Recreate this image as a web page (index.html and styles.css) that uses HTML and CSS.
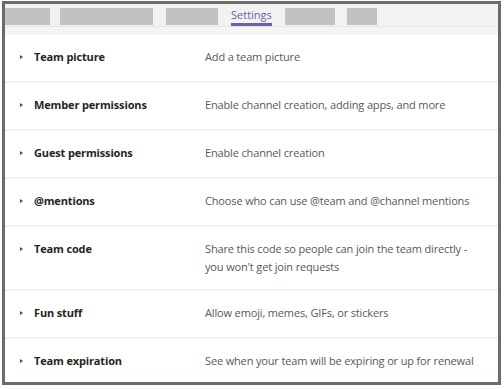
FILE: index.html
```html
<!DOCTYPE html>
<html>
<head>
<meta charset="utf-8">
<link rel="stylesheet" href="styles.css">
</head>
<body>
<div class="frame">
  <div class="tabbar">
    <div class="tabs">
      <span class="ph ph1"></span>
      <span class="ph ph2"></span>
      <span class="ph ph3"></span>
      <span class="tab active">Settings</span>
      <span class="ph ph4"></span>
      <span class="ph ph5"></span>
    </div>
    <div class="band"></div>
  </div>
  <div class="rows">
    <div class="row"><span class="arrow"></span><span class="title">Team picture</span><span class="desc">Add a team picture</span></div>
    <div class="row"><span class="arrow"></span><span class="title">Member permissions</span><span class="desc">Enable channel creation, adding apps, and more</span></div>
    <div class="row"><span class="arrow"></span><span class="title">Guest permissions</span><span class="desc">Enable channel creation</span></div>
    <div class="row"><span class="arrow"></span><span class="title">@mentions</span><span class="desc">Choose who can use @team and @channel mentions</span></div>
    <div class="row multi"><span class="arrow"></span><span class="title">Team code</span><span class="desc">Share this code so people can join the team directly -<br>you won't get join requests</span></div>
    <div class="row"><span class="arrow"></span><span class="title">Fun stuff</span><span class="desc">Allow emoji, memes, GIFs, or stickers</span></div>
    <div class="row last"><span class="arrow"></span><span class="title">Team expiration</span><span class="desc">See when your team will be expiring or up for renewal</span></div>
  </div>
</div>
</body>
</html>
```
FILE: styles.css
```css
html, body {
  margin: 0;
  padding: 0;
  background: #ffffff;
}
body {
  font-family: "Open Sans", "Noto Sans", sans-serif;
  width: 504px;
  height: 389px;
  overflow: hidden;
}
.frame {
  box-sizing: border-box;
  margin: 1px 0 0 2px;
  width: 499px;
  height: 384px;
  border: 3px solid #6f6a6a;
  background: #ffffff;
  overflow: hidden;
}
.tabbar {
  background: #f3f2f1;
}
.tabs {
  display: flex;
  align-items: flex-start;
  gap: 13px;
  height: 18px;
  padding-top: 4px;
  border-bottom: 1px solid #e6e5e4;
}
.ph {
  display: block;
  height: 17px;
  background: #c2c2c2;
}
.ph1 { width: 45px; margin-right: -3px; }
.ph2 { width: 93px; }
.ph3 { width: 52px; }
.ph4 { width: 50px; }
.ph5 { width: 30px; margin-left: -1px; }
.tab {
  box-sizing: border-box;
  height: 18px;
  font-size: 11px;
  line-height: 14px;
  color: #6264a7;
  border-bottom: 3px solid #6264a7;
}
.band {
  height: 8px;
  background: #f5f4f3;
}
.rows {
  display: flex;
  flex-direction: column;
}
.row {
  display: flex;
  align-items: flex-start;
  padding: 13px 0 15px 0;
  border-bottom: 2px solid #f1f0ef;
  font-size: 11px;
  line-height: 18px;
  letter-spacing: -0.15px;
}
.row.multi { padding-bottom: 13px; }
.row.last { border-bottom: none; }
.arrow {
  flex: none;
  width: 0;
  height: 0;
  margin: 7px 0 0 15px;
  border-left: 3px solid #4a4a4a;
  border-top: 2.5px solid transparent;
  border-bottom: 2.5px solid transparent;
}
.title {
  flex: none;
  width: 171px;
  margin-left: 11px;
  font-weight: 700;
  color: #252423;
}
.desc {
  color: #5a5857;
}
```
